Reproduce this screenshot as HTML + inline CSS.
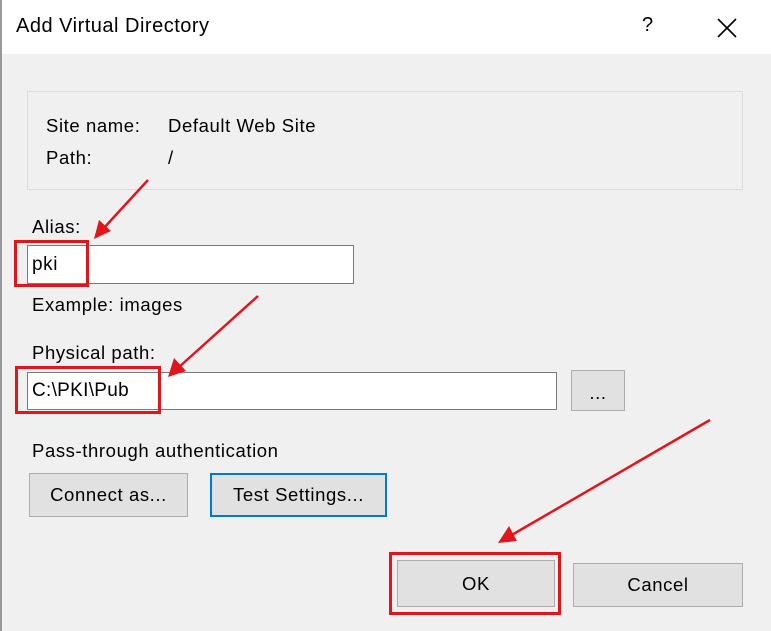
<!DOCTYPE html>
<html><head><style>
*{margin:0;padding:0;box-sizing:border-box}
body{width:771px;height:631px;background:#f0f0f0;font-family:"Liberation Sans",sans-serif;font-size:18.5px;letter-spacing:0.6px;color:#000;position:relative;overflow:hidden}
.a{position:absolute;white-space:nowrap}
.title{position:absolute;left:0;top:0;width:771px;height:54px;background:#fff}
.inp{position:absolute;background:#fff;border:1px solid #7a7a7a}
.btn{position:absolute;background:#e1e1e1;border:1px solid #adadad;text-align:center}
.red{position:absolute;border:3px solid #e0161d}
</style></head><body>
<div class="title"></div>
<div class="a" style="left:0;top:0;width:2px;height:631px;background:#9a9a9a"></div>
<div class="a" style="left:16px;top:15px;font-size:20px;letter-spacing:0.5px">Add Virtual Directory</div>
<div class="a" style="left:642px;top:14px;font-size:20px">?</div>
<svg class="a" style="left:716px;top:17px" width="22" height="22"><path d="M2 2L20 20M20 2L2 20" stroke="#000" stroke-width="1.6"/></svg>
<div class="a" style="left:27px;top:91px;width:716px;height:99px;border:1px solid #dcdcdc"></div>
<div class="a" style="left:46px;top:115px">Site name:</div>
<div class="a" style="left:168px;top:115px">Default Web Site</div>
<div class="a" style="left:46px;top:147px">Path:</div>
<div class="a" style="left:168px;top:147px">/</div>
<div class="a" style="left:32px;top:216px">Alias:</div>
<div class="inp" style="left:27px;top:245px;width:327px;height:39px"></div>
<div class="a" style="left:32px;top:254px;font-size:19px">pki</div>
<div class="red" style="left:14px;top:240px;width:75px;height:47px"></div>
<div class="a" style="left:32px;top:294px">Example: images</div>
<div class="a" style="left:32px;top:342px">Physical path:</div>
<div class="inp" style="left:27px;top:372px;width:530px;height:38px"></div>
<div class="a" style="left:32px;top:380px;font-size:19px;letter-spacing:0.3px">C:\PKI\Pub</div>
<div class="red" style="left:15px;top:366px;width:146px;height:48px"></div>
<div class="btn" style="left:571px;top:370px;width:54px;height:41px;line-height:44px">...</div>
<div class="a" style="left:32px;top:440px">Pass-through authentication</div>
<div class="btn" style="left:29px;top:473px;width:159px;height:44px;line-height:42px">Connect as...</div>
<div class="btn" style="left:210px;top:473px;width:177px;height:44px;line-height:40px;border:2px solid #0078d7">Test Settings...</div>
<div class="btn" style="left:397px;top:560px;width:158px;height:47px;line-height:45px">OK</div>
<div class="red" style="left:389px;top:552px;width:172px;height:63px"></div>
<div class="btn" style="left:573px;top:563px;width:170px;height:44px;line-height:42px">Cancel</div>
<svg class="a" style="left:0;top:0" width="771" height="631">
<g stroke="#e0161d" stroke-width="2.5" fill="#e0161d">
<line x1="148" y1="180" x2="103" y2="229"/>
<polygon points="94,239 99,220 111,231" stroke="none"/>
<line x1="258" y1="296" x2="178" y2="368"/>
<polygon points="168,377 174,358 186,371" stroke="none"/>
<line x1="710" y1="420" x2="510" y2="536"/>
<polygon points="498,543 509,526 517,541" stroke="none"/>
</g></svg>
</body></html>
